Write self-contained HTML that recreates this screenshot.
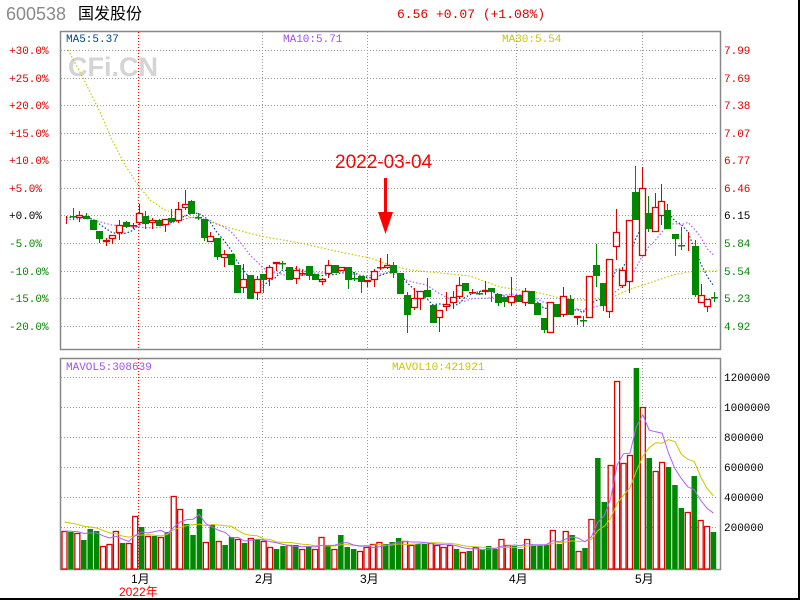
<!DOCTYPE html>
<html><head><meta charset="utf-8"><style>
html,body{margin:0;padding:0;background:#fff;}
svg{display:block}
text{font-family:"Liberation Mono","Noto Sans CJK SC",monospace;}
</style></head><body>
<svg id="s" width="800" height="600" xmlns="http://www.w3.org/2000/svg">
<rect x="0" y="0" width="800" height="600" fill="#fff"/>
<line x1="799" y1="0" x2="799" y2="600" stroke="#000" stroke-width="2"/>
<line x1="0" y1="599" x2="800" y2="599" stroke="#000" stroke-width="2"/>
<text x="6" y="20" font-size="18" fill="#8a8a8a" style="font-family:'Liberation Sans',sans-serif">600538</text>
<text x="78" y="19" font-size="16" fill="#000" style="font-family:'Liberation Sans','Noto Sans CJK SC',sans-serif">国发股份</text>
<text x="397" y="18" font-size="13" fill="#d00">6.56 +0.07 (+1.08%)</text>
<g id="grid"></g>
<text x="68" y="76" font-size="27" font-weight="bold" fill="#d4d4d4" style="font-family:'Liberation Sans',sans-serif">CFi.CN</text>
<g id="lbl" font-size="11"></g>
<text x="66" y="42" font-size="11" fill="#00458a">MA5:5.37</text>
<text x="283" y="42" font-size="11" fill="#a050f0">MA10:5.71</text>
<text x="502" y="42" font-size="11" fill="#c8c800">MA30:5.54</text>
<text x="66" y="370" font-size="11" fill="#a050f0">MAVOL5:308639</text>
<text x="392" y="370" font-size="11" fill="#c8c800">MAVOL10:421921</text>
<text x="335" y="168" font-size="19" fill="#f00" style="font-family:'Liberation Sans',sans-serif;font-weight:300">2022-03-04</text>
<rect x="384" y="178" width="3" height="40" fill="#f00"/>
<polygon points="378,212 393,212 385.5,234" fill="#f00"/>
<g id="ch"></g>
</svg>
<script>
var NS="http://www.w3.org/2000/svg";
function el(p,t,a,txt){var e=document.createElementNS(NS,t);for(var k in a)e.setAttribute(k,a[k]);if(txt)e.textContent=txt;p.appendChild(e);return e;}
var G=document.getElementById('grid'),L=document.getElementById('lbl'),C=document.getElementById('ch');
el(G,'rect',{x:60.5,y:31.5,width:660,height:318,fill:'none',stroke:'#888','stroke-width':1.5});
el(G,'rect',{x:60.5,y:358.5,width:660,height:211,fill:'none',stroke:'#888','stroke-width':1.5});
var hy=[50,78,105,133,160,188,215,243,271,298,326];
var pct=['+30.0%','+25.0%','+20.0%','+15.0%','+10.0%','+5.0%','+0.0%','-5.0%','-10.0%','-15.0%','-20.0%'];
var pr=['7.99','7.69','7.38','7.07','6.77','6.46','6.15','5.84','5.54','5.23','4.92'];
hy.forEach(function(y,i){
 el(G,'line',{x1:61,y1:y+.5,x2:718,y2:y+.5,stroke:'#999','stroke-dasharray':'1,2'});
 var c=i<6?'#d00':(i==6?'#000':'#080');
 el(L,'text',{x:9,y:y+4,fill:c},pct[i]);
 el(L,'text',{x:724,y:y+4,fill:c},pr[i]);
});
[377,407,437,467,497,527].forEach(function(y,i){
 el(G,'line',{x1:61,y1:y+.5,x2:718,y2:y+.5,stroke:'#999','stroke-dasharray':'1,2'});
 el(L,'text',{x:724,y:y+4,fill:'#000'},String((6-i)*200000));
});
var vx=[[138,'1月'],[262,'2月'],[367,'3月'],[516,'4月'],[642,'5月']];
vx.forEach(function(v,i){
 var red=i==0;
 el(G,'line',{x1:v[0]+.5,y1:32,x2:v[0]+.5,y2:349,stroke:red?'#f00':'#999','stroke-dasharray':'1,2'});
 el(G,'line',{x1:v[0]+.5,y1:359,x2:v[0]+.5,y2:569,stroke:red?'#f00':'#999','stroke-dasharray':'1,2'});
 el(L,'text',{x:v[0]-7,y:583,fill:'#000',style:"font-family:'Liberation Sans','Noto Sans CJK SC',sans-serif",'font-size':12},v[1]);
});
el(L,'text',{x:119,y:596,fill:'#f00',style:"font-family:'Liberation Sans','Noto Sans CJK SC',sans-serif",'font-size':12},'2022年');
var K=[[66,'r',216,217,216,224],[73,'g',216,216,208,220],[79,'r',215,218,211,222],[86,'g',216,219,213,219],[93,'g',220,230,220,230],[99,'g',231,239,231,243],[106,'r',240,242,238,246],[112,'r',235,239,235,244],[119,'r',225,233,220,240],[126,'g',222,227,221,228],[133,'r',225,225,223,229],[139,'r',213,223,204,224],[145,'g',216,224,211,229],[152,'r',220,223,218,229],[159,'g',220,226,219,226],[165,'r',219,225,219,232],[171,'g',218,222,209,223],[178,'r',209,221,202,223],[185,'r',204,208,190,210],[191,'g',201,214,200,214],[198,'g',217,217,213,220],[204,'g',219,238,219,241],[210,'r',236,242,232,242],[217,'g',238,257,238,260],[224,'r',254,258,250,267],[231,'g',254,265,254,265],[237,'g',265,293,265,293],[243,'r',279,288,264,293],[250,'g',275,299,275,299],[257,'r',279,293,276,300],[263,'g',274,280,274,293],[269,'r',267,279,265,286],[276,'r',262,264,262,271],[282,'g',263,263,261,269],[289,'g',267,280,267,280],[296,'r',270,279,266,284],[302,'r',273,273,270,276],[309,'g',266,276,266,280],[315,'g',274,280,274,280],
[322,'r',279,282,278,285],[328,'r',265,274,260,278],[335,'g',265,273,265,273],[341,'r',267,271,267,271],[348,'g',267,280,267,289],[354,'g',278,278,272,281],[361,'g',276,282,276,293],[367,'r',280,282,280,287],[374,'r',271,280,269,287],[380,'r',267,267,258,270],[387,'r',265,268,254,269],[393,'g',265,273,262,278],[400,'g',273,294,273,294],[407,'g',295,315,292,333],[414,'r',298,308,288,310],[420,'r',291,299,291,310],[427,'g',290,297,278,297],[433,'g',305,323,305,323],[439,'r',310,318,310,332],[446,'r',304,307,292,311],[453,'r',297,303,291,309],[459,'r',285,297,277,299],[465,'g',283,291,283,291],[472,'r',292,292,289,294],[479,'g',293,293,291,295],[485,'r',290,292,281,295],[491,'g',288,292,288,302],[498,'g',294,303,294,306],[504,'g',297,302,297,307],[511,'r',296,303,277,306],[518,'g',295,302,295,302],[525,'r',291,303,288,306],[531,'g',291,304,291,304],[537,'g',303,315,303,315],[544,'g',318,330,318,333],[550,'r',302,333,302,333],[557,'g',304,317,304,317],[563,'r',296,315,287,317],[570,'g',299,315,295,315],[577,'r',316,318,316,325],
[583,'g',320,320,316,327],[589,'r',276,318,276,318],[596,'g',265,276,244,287],[603,'g',283,306,283,311],[609,'r',259,312,259,318],[616,'r',232,247,209,260],[622,'r',270,286,268,288],[629,'r',220,282,220,293],[635,'g',192,220,166,220],[642,'r',188,256,167,256],[648,'g',213,229,196,232],[655,'r',207,232,193,232],[661,'r',201,216,184,225],[667,'g',210,229,204,229],[675,'g',234,239,234,256],[681,'g',245,245,227,250],[688,'r',246,247,232,251],[695,'g',246,295,240,297],[701,'r',295,303,284,303],[707,'r',299,307,299,312],[714,'g',297,297,292,302]];
var RED='#d00',GRN='#080';
var cl=K.map(function(k){return k[1]=='r'?k[2]:k[3];});
function ma(n,pre){var pts=[];for(var i=0;i<cl.length;i++){var s=0,c=0;for(var j=Math.max(0,i-n+1);j<=i;j++){s+=cl[j];c++;}if(c<n)s+=pre*(n-c),c=n;pts.push(K[i][0]+','+(s/c).toFixed(1));}return pts.join(' ');}
el(C,'polyline',{points:ma(5,218),fill:'none',stroke:'#00458a','stroke-width':1.2,'stroke-dasharray':'1.5,2'});
el(C,'polyline',{points:ma(10,220),fill:'none',stroke:'#b060ff','stroke-width':1.2,'stroke-dasharray':'1.5,2'});
el(C,'polyline',{points:'68,50 80,72 90,92 100,112 112,140 125,165 138,185 150,200 165,210 185,216 205,220 230,228 260,236 300,243 340,252 370,258 390,265 410,270 440,273 470,276 500,287 540,293 560,298 575,300 590,300 600,298 613,297 628,290 643,285 658,280 673,275 693,271 717,271',fill:'none',stroke:'#c8c800','stroke-width':1.2,'stroke-dasharray':'1.5,2'});
K.forEach(function(k){
 var x=k[0],c=k[1]=='r'?RED:GRN;
 el(C,'line',{x1:x+.5,y1:k[4],x2:x+.5,y2:k[5],stroke:c,'stroke-width':1});
 var h=k[3]-k[2];
 if(h<1){el(C,'rect',{x:x-3,y:k[2],width:7,height:1.5,fill:c});}
 else if(k[1]=='r'){el(C,'rect',{x:x-2.5,y:k[2]+.5,width:6,height:h-1,fill:'#fff',stroke:c,'stroke-width':1.3});}
 else el(C,'rect',{x:x-3,y:k[2],width:7,height:h,fill:c});
});
var V='r531 g532 r533 g540 g529 g531 r546 r544 r531 g543 r543 r516 g527 r536 g536 r537 g532 r496 r509 g524 g535 g509 r542 g525 r541 g545 g537 r539 g543 r538 g539 r541 r547 g549 g546 r545 g545 r549 g547 r549 r537 g545 r549 g535 g547 g549 r551 r547 r544 r542 g544 g542 g538 r541 r545 g544 g544 r543 r545 r547 r545 g549 r552 g551 r547 g550 g546 g549 r539 r545 g546 g549 r539 g545 g545 g545 r530 g544 r531 g535 r551 g548 r519 g458 g502 r465 r381 r463 r455 g368 r407 g458 r471 r462 g467 g485 g508 r512 g476 r520 r526 g532'.split(' ');
var n=V.length,vx0=64.5,st=(713.5-64.5)/(n-1),tops=[];
V.forEach(function(v,i){
 var x=vx0+st*i,t=+v.slice(1);tops.push(t);
 if(v[0]=='r')el(C,'rect',{x:x-2.5,y:t+.5,width:5,height:569-t-.5,fill:'#fff',stroke:RED,'stroke-width':1.3});
 else el(C,'rect',{x:x-2.75,y:t,width:5.5,height:569-t,fill:GRN});
});
function vma(nn,pre){var p=[];for(var i=0;i<n;i++){var s=0,c=0;for(var j=Math.max(0,i-nn+1);j<=i;j++){s+=569-tops[j];c++;}if(c<nn){s+=pre*(nn-c);c=nn;}p.push((vx0+st*i).toFixed(1)+','+(569-s/c).toFixed(1));}return p.join(' ');}
el(C,'polyline',{points:vma(10,48),fill:'none',stroke:'#c8c800','stroke-width':1});
el(C,'polyline',{points:vma(5,38),fill:'none',stroke:'#b060ff','stroke-width':1});
</script>
</body></html>
